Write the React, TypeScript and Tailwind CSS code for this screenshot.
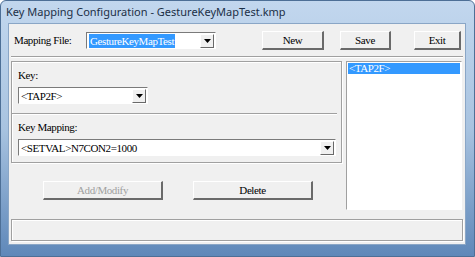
import React from "react";

const serif = { fontFamily: '"Liberation Serif", "Times New Roman", serif', letterSpacing: "-0.4px" };

function Arrow() {
  return (
    <div className="w-[14px] h-[14px] bg-[#f0f0f0] border-t border-l border-t-white border-l-white border-b border-r border-b-[#696969] border-r-[#696969] flex items-center justify-center">
      <svg width="7" height="4" viewBox="0 0 7 4">
        <polygon points="0,0 7,0 3.5,4" fill="#000" />
      </svg>
    </div>
  );
}

function Combo({ w, children }: { w: string; children: React.ReactNode }) {
  return (
    <div className={`${w} h-[17px] border-t border-l border-t-[#7a7a7a] border-l-[#7a7a7a] border-b border-r border-b-white border-r-white bg-white flex items-center justify-between pl-[2px] pr-[1px]`}>
      <div className="text-[11px] leading-[14px] text-black whitespace-nowrap">{children}</div>
      <Arrow />
    </div>
  );
}

function Btn({ w, children, disabled }: { w: string; children: React.ReactNode; disabled?: boolean }) {
  return (
    <div className={`${w} h-[19px] bg-[#f0f0f0] border-t border-l border-t-white border-l-white border-b-2 border-r-2 border-b-[#6a6a6a] border-r-[#6a6a6a] flex items-center justify-center text-[11px] ${disabled ? "text-[#a0a0a0]" : "text-black"}`}>
      {children}
    </div>
  );
}

export default function App() {
  return (
    <div className="w-[475px] h-[257px] relative bg-gradient-to-b from-[#c2d7ee] via-[#a8c3e0] to-[#5f88b9] rounded-t-[6px] border border-[#4d6f96] flex flex-col overflow-hidden">
      <div className="h-[22px] flex items-center pl-[5px] text-[11px] text-[#1b2f46]" style={{ fontFamily: '"Noto Sans", "Open Sans", sans-serif' }}>
        Key Mapping Configuration - GestureKeyMapTest.kmp
      </div>
      <div className="ml-[7px] mr-[7px] w-[458px] h-[222px] bg-[#f0f0f0] border border-[#8aa6c6] flex flex-col" style={serif}>
        {/* top row */}
        <div className="flex items-center h-[32px] pt-[1px]">
          <div className="ml-[5px] w-[72px] text-[11px] text-black">Mapping File:</div>
          <div className="w-[130px] h-[17px] border-t border-l border-t-[#7a7a7a] border-l-[#7a7a7a] border-b border-r border-b-white border-r-white bg-white flex items-center justify-between pl-[2px] pr-[1px]">
            <div className="bg-[#3399ff] text-white text-[11px] leading-[14px] px-[1px]">GestureKeyMapTest</div>
            <Arrow />
          </div>
          <div className="ml-[46px]"><Btn w="w-[62px]">New</Btn></div>
          <div className="ml-[16px]"><Btn w="w-[51px]">Save</Btn></div>
          <div className="ml-[23px]"><Btn w="w-[47px]">Exit</Btn></div>
        </div>
        <div className="mx-[2px] h-0 border-t border-t-[#a0a0a0] border-b border-b-white" />
        <div className="flex mt-[3px]">
          <div className="flex flex-col">
            <div className="ml-[2px] w-[331px] h-[102px] border border-[#a0a0a0] shadow-[inset_1px_1px_0_#ffffff,1px_1px_0_#ffffff] flex flex-col">
              <div className="ml-[6px] mt-[6px] text-[11px] leading-[14px] text-black">Key:</div>
              <div className="ml-[6px] mt-[5px]"><Combo w="w-[130px]">&lt;TAP2F&gt;</Combo></div>
              <div className="mt-[9px] mr-[4px] h-0 border-t border-t-[#a0a0a0] border-b border-b-white" />
              <div className="ml-[6px] mt-[5px] text-[11px] leading-[14px] text-black">Key Mapping:</div>
              <div className="ml-[6px] mt-[5px]"><Combo w="w-[318px]">&lt;SETVAL&gt;N7CON2=1000</Combo></div>
            </div>
            <div className="flex mt-[18px]">
              <div className="ml-[34px]"><Btn w="w-[120px]" disabled>Add/Modify</Btn></div>
              <div className="ml-[30px]"><Btn w="w-[120px]">Delete</Btn></div>
            </div>
          </div>
          <div className="ml-[4px] w-[116px] h-[149px] border-t border-l border-t-[#a0a0a0] border-l-[#a0a0a0] border-b border-r border-b-white border-r-white bg-white p-[1px]">
            <div className="h-[11px] bg-[#3399ff] text-white text-[11px] leading-[11px] pl-[1px]">&lt;TAP2F&gt;</div>
          </div>
        </div>
        <div className="mx-[2px] mt-[9px] w-[452px] h-[22px] border border-[#a0a0a0] shadow-[inset_1px_1px_0_#ffffff,1px_1px_0_#ffffff]" />
      </div>
    </div>
  );
}
